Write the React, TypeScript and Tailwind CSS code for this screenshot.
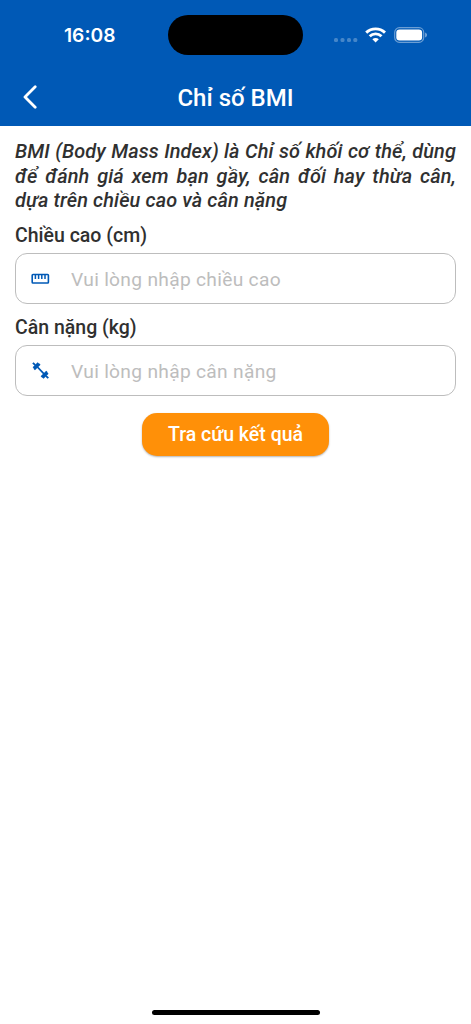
import { useState } from "react";
import type { ReactNode } from "react";

function StatusBar() {
  return (
    <div className="flex h-[70px] shrink-0 items-center text-white">
      <div className="w-[168px] pt-[2px] pl-[64px] font-['Inter',sans-serif] text-[19.2px] leading-none font-semibold">
        16:08
      </div>
      <div className="h-[40px] w-[135px] rounded-full bg-black" />
      <div className="flex flex-1 items-center pl-[31px]">
        <svg width="24" height="20" viewBox="0 0 24 20" fill="white" fillOpacity="0.27">
          <rect x="0" y="13" width="4" height="4" rx="1.5" />
          <rect x="6.5" y="13" width="4" height="4" rx="1.5" />
          <rect x="13" y="13" width="4" height="4" rx="1.5" />
          <rect x="19.3" y="13" width="4" height="4" rx="1.5" />
        </svg>
        <svg className="ml-[7px]" width="22" height="16" viewBox="0 0 22 16" fill="none" stroke="white" strokeWidth="2.9">
          <path d="M1.2 5.6a13.6 13.6 0 0 1 18.8 0" />
          <path d="M4.7 9.3a8.5 8.5 0 0 1 11.8 0" />
          <path d="M7.4 12.2a4.6 4.6 0 0 1 6.4 0L10.6 15.5Z" fill="white" stroke="none" />
        </svg>
        <svg className="ml-[7px]" width="34" height="16" viewBox="0 0 34 16" fill="none">
          <rect x="0.7" y="0.7" width="29" height="14.6" rx="4.7" stroke="white" strokeOpacity="0.42" strokeWidth="1.2" />
          <rect x="2.3" y="2.4" width="25.8" height="11.2" rx="3.3" fill="white" />
          <path d="M31.2 5.6v4.8c1.1-.4 1.7-1.3 1.7-2.4s-.6-2-1.7-2.4Z" fill="white" fillOpacity="0.5" />
        </svg>
      </div>
    </div>
  );
}

function RulerIcon() {
  return (
    <svg width="20" height="20" viewBox="0 0 20 20" fill="none" stroke="#0059b6" strokeWidth="1.6">
      <rect x="1.2" y="5.5" width="16.2" height="8.5" rx="0.8" />
      <path d="M4.4 5.9v4M7.6 5.9v4M10.8 5.9v4M14 5.9v4" strokeWidth="1.5" />
    </svg>
  );
}

function DumbbellIcon() {
  return (
    <svg width="20" height="20" viewBox="0 0 20 20" fill="none" stroke="#0059b6">
      <path d="M5 4.5l9.4 9.8" strokeWidth="1.8" />
      <path d="M2.4 7.1l5-5M3.2 8.5l5.6-5.6M10.4 16.1l5.6-5.6M11.8 16.9l5-5" strokeWidth="2.1" />
      <path d="M1.9 1.8l2.4 2.4M14.9 14.8l2.4 2.4" strokeWidth="1.9" />
    </svg>
  );
}

interface FieldProps {
  label: string;
  placeholder: string;
  icon: ReactNode;
  value: string;
  onChange: (value: string) => void;
}

function Field({ label, placeholder, icon, value, onChange }: FieldProps) {
  return (
    <label className="block">
      <span className="block h-[30px] text-[19.5px] leading-[25px] font-medium text-[#303030]">{label}</span>
      <div className="flex h-[51px] items-center rounded-[12px] border border-[#bdbdbd] pl-[15px]">
        {icon}
        <input
          className="ml-5 min-w-0 flex-1 bg-transparent pt-[3px] text-[19.2px] tracking-[0.3px] text-[#303030] outline-none placeholder:text-[#bdbdbd]"
          inputMode="decimal"
          placeholder={placeholder}
          value={value}
          onChange={(e) => onChange(e.target.value)}
        />
      </div>
    </label>
  );
}

export default function App() {
  const [height, setHeight] = useState("");
  const [weight, setWeight] = useState("");

  return (
    <div className="flex h-screen flex-col bg-white font-['Roboto',sans-serif]">
      <header className="h-[126px] shrink-0 bg-[#0059b6] text-white">
        <StatusBar />
        <div className="grid h-[54px] grid-cols-[80px_1fr_80px] items-center">
          <button aria-label="Quay lại" className="pl-[22px]">
            <svg width="16" height="24" viewBox="0 0 16 24" fill="none" stroke="white" strokeWidth="2.8" strokeLinecap="round" strokeLinejoin="round">
              <path d="M13.2 1.8 3 12l10.2 10.2" />
            </svg>
          </button>
          <h1 className="pt-[2px] text-center text-[24px] font-medium">Chỉ số BMI</h1>
        </div>
      </header>

      <main className="flex-1 px-[15px] pt-[14px]">
        <p className="text-justify text-[19.9px] leading-[24.7px] font-medium tracking-[0.12px] text-[#303030] italic">
          BMI (Body Mass Index) là Chỉ số khối cơ thể, dùng để đánh giá xem bạn gầy, cân đối hay thừa cân, dựa trên
          chiều cao và cân nặng
        </p>
        <div className="mt-[9px] flex flex-col gap-[11px]">
          <Field
            label="Chiều cao (cm)"
            placeholder="Vui lòng nhập chiều cao"
            icon={<RulerIcon />}
            value={height}
            onChange={setHeight}
          />
          <Field
            label="Cân nặng (kg)"
            placeholder="Vui lòng nhập cân nặng"
            icon={<DumbbellIcon />}
            value={weight}
            onChange={setWeight}
          />
        </div>
        <button className="mx-auto mt-[16.5px] block h-[43px] w-[187px] rounded-[15px] bg-[#ff9008] pt-px text-[19.5px] font-medium text-white shadow-[0_1px_2px_rgba(0,0,0,0.3)]">
          Tra cứu kết quả
        </button>
      </main>

      <div className="mx-auto mb-[9px] h-[5px] w-[168px] shrink-0 rounded-full bg-black" />
    </div>
  );
}
